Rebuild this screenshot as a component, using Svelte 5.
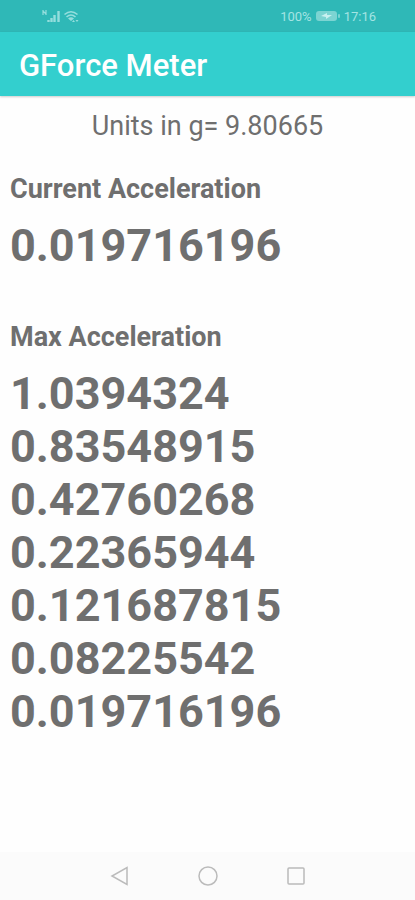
<script>
  const current = '0.019716196';
  const peaks = ['1.0394324', '0.83548915', '0.42760268', '0.22365944', '0.121687815', '0.08225542', '0.019716196'];
</script>

<div class="screen">
  <div class="status">
    <svg width="38" height="16" viewBox="0 0 38 16" aria-hidden="true">
      <path d="M2 2v5M5 2v5M2 3l3 3" fill="none" stroke="#94dedd" stroke-width="1.2" />
      <path d="M7.5 14v-2M10.5 14v-4M13.5 14V7M17.5 14V3" stroke="#94dedd" stroke-width="2.4" />
      <path d="M23.5 6.5q6.500-5.500 13 0M25.500 9q4.500-4 9 0" fill="none" stroke="#94dedd" stroke-width="1.6" />
      <path d="M27 10.500q3-2.500 6 0l-3 2.500z" fill="#94dedd" />
      <path d="M31 14l1.500-2 1.500 2zM34.500 12h3L36 14z" fill="#94dedd" />
    </svg>
    <div class="power">
      <span>100%</span>
      <svg width="24" height="12" viewBox="0 0 24 12" aria-hidden="true">
        <rect x="0" y="1" width="21" height="10" rx="3" fill="#7cd4d2" />
        <rect x="22" y="4" width="2" height="4" rx="1" fill="#7cd4d2" />
        <path d="M5 6l6-3v2h5l-6 4V7z" fill="#c8f1f0" />
      </svg>
      <span>17:16</span>
    </div>
  </div>
  <header><h1>GForce Meter</h1></header>
  <main>
    <p class="units">Units in g= 9.80665</p>
    <section>
      <h2>Current Acceleration</h2>
      <p class="value">{current}</p>
    </section>
    <section>
      <h2>Max Acceleration</h2>
      {#each peaks as peak}
        <p class="value">{peak}</p>
      {/each}
    </section>
  </main>
  <nav>
    <button aria-label="Back"><svg width="20" height="22" viewBox="0 0 20 22"><path d="M17 2.500v17L2 11z" /></svg></button>
    <button aria-label="Home"><svg width="20" height="22" viewBox="0 0 20 22"><circle cx="10" cy="11" r="9" /></svg></button>
    <button aria-label="Recent apps"><svg width="20" height="22" viewBox="0 0 20 22"><rect x="2" y="3" width="16" height="16" rx="1" /></svg></button>
  </nav>
</div>

<style>
  :global(body) { margin: 0; background: #fefefe; }
  .screen { min-height: 100vh; display: flex; flex-direction: column; font-family: Roboto, sans-serif; color: #6f6f6f; background: #fefefe; }
  .status { height: 32px; display: flex; justify-content: space-between; align-items: center; box-sizing: border-box; padding: 0 39px 0 41px; background: #2fb8b7; color: #a4e4e3; font-size: 13px; }
  .power { display: flex; align-items: center; gap: 4px; }
  header { height: 64px; display: flex; align-items: center; padding: 4px 19px 0; box-sizing: border-box; background: #33cfce; color: #fff; box-shadow: 0 1px 2px #0003; }
  h1 { margin: 0; font-size: 31px; line-height: 36px; font-weight: 500; }
  main { flex: 1; padding: 12px 10px; }
  p, h2 { margin: 0; }
  .units { text-align: center; font-size: 27px; line-height: 36px; }
  section { padding-top: 29px; }
  section + section { padding-top: 49px; }
  h2 { font-size: 27px; line-height: 32px; font-weight: 700; margin-bottom: 14px; }
  .value { font-size: 45px; line-height: 53px; font-weight: 700; }
  nav { height: 48px; display: flex; justify-content: center; align-items: center; gap: 68px; background: #fbfbfb; }
  button { border: 0; padding: 0; background: none; display: flex; }
  nav svg { fill: none; stroke: #bbb; stroke-width: 1.5; }
</style>
